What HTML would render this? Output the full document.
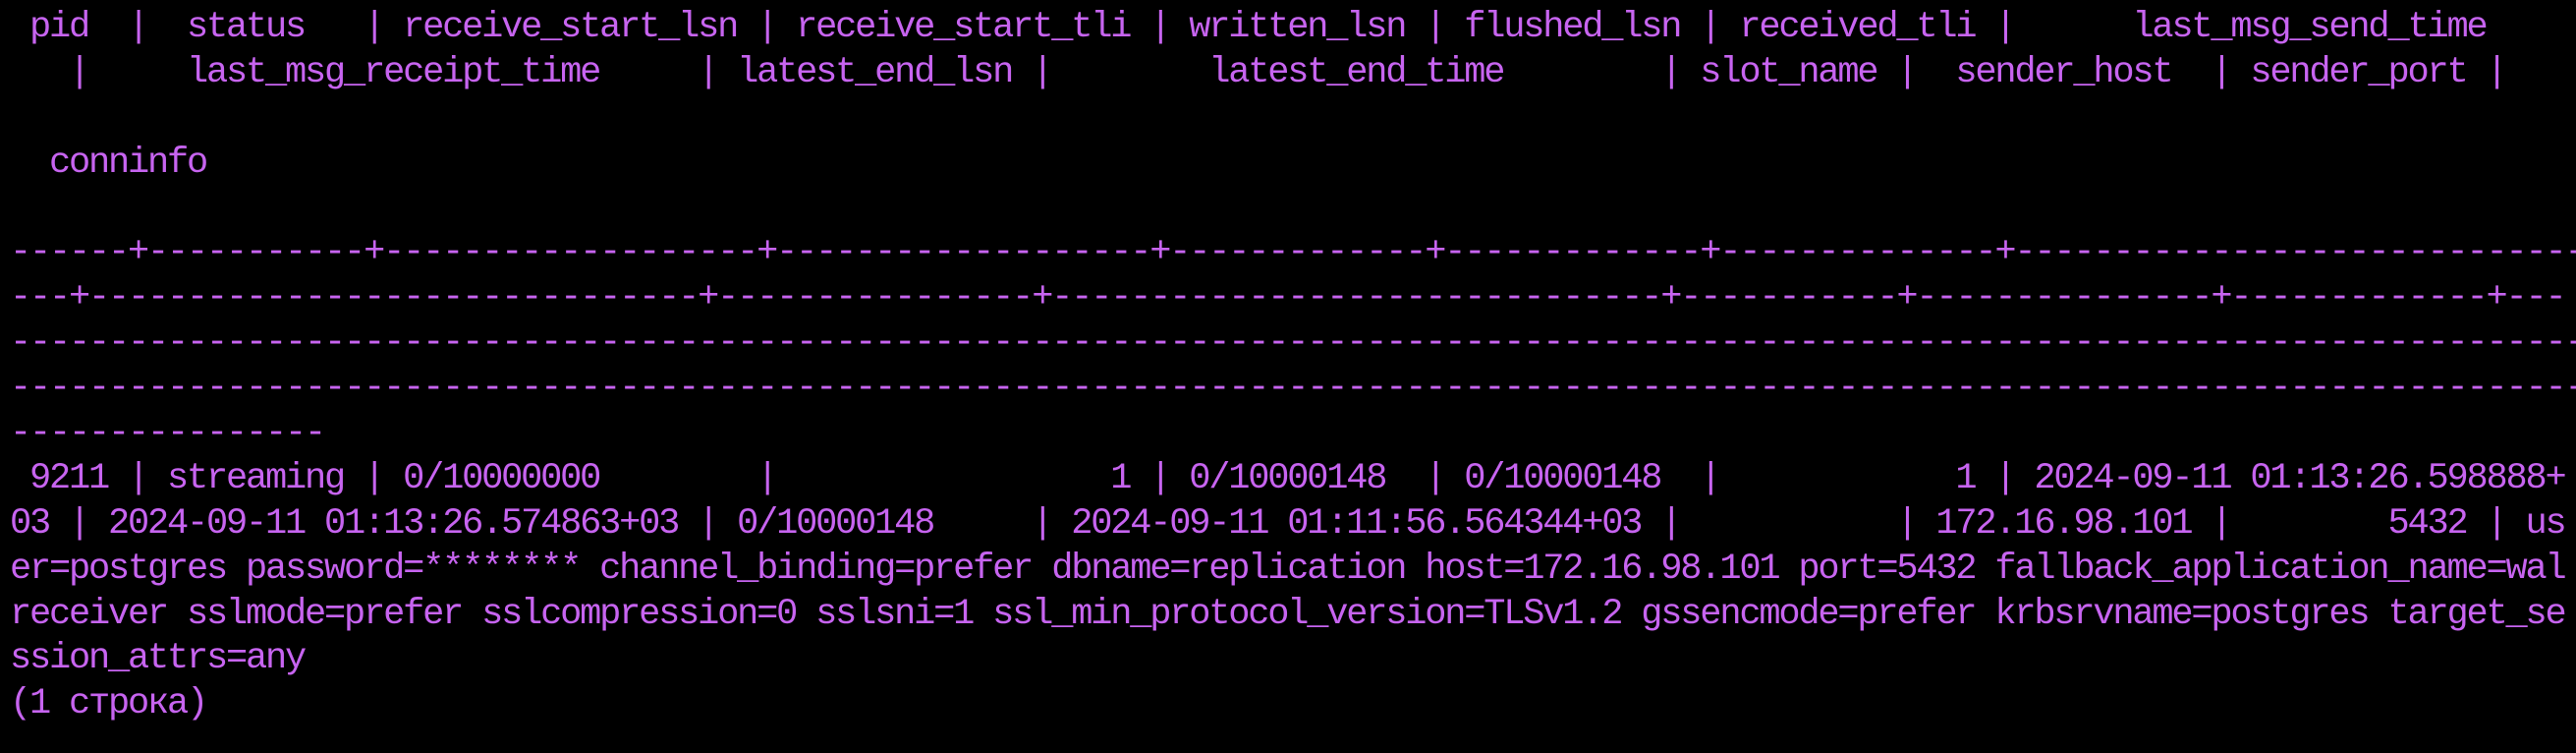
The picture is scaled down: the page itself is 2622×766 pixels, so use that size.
<!DOCTYPE html>
<html><head><meta charset="utf-8"><style>
html,body{margin:0;padding:0;background:#000;width:2622px;height:766px;overflow:hidden}
.t{position:absolute;left:10px;top:6px;font-family:"Liberation Mono","DejaVu Sans Mono",monospace;font-size:37px;letter-spacing:-2.2px;line-height:45.9px;color:#c764f0}
.t div{white-space:pre;height:45.9px;width:2613px;overflow:hidden}
</style></head><body><div class="t">
<div> pid  |  status   | receive_start_lsn | receive_start_tli | written_lsn | flushed_lsn | received_tli |      last_msg_send_time</div>
<div>   |     last_msg_receipt_time     | latest_end_lsn |        latest_end_time        | slot_name |  sender_host  | sender_port |</div>
<div> </div>
<div>  conninfo</div>
<div> </div>
<div>------+-----------+-------------------+-------------------+-------------+-------------+--------------+--------------------------------------------------</div>
<div>---+-------------------------------+----------------+-------------------------------+-----------+---------------+-------------+---</div>
<div>------------------------------------------------------------------------------------------------------------------------------------------------------</div>
<div>------------------------------------------------------------------------------------------------------------------------------------------------------</div>
<div>----------------</div>
<div> 9211 | streaming | 0/10000000        |                 1 | 0/10000148  | 0/10000148  |            1 | 2024-09-11 01:13:26.598888+</div>
<div>03 | 2024-09-11 01:13:26.574863+03 | 0/10000148     | 2024-09-11 01:11:56.564344+03 |           | 172.16.98.101 |        5432 | us</div>
<div>er=postgres password=******** channel_binding=prefer dbname=replication host=172.16.98.101 port=5432 fallback_application_name=wal</div>
<div>receiver sslmode=prefer sslcompression=0 sslsni=1 ssl_min_protocol_version=TLSv1.2 gssencmode=prefer krbsrvname=postgres target_se</div>
<div>ssion_attrs=any</div>
<div>(1 строка)</div>
</div></body></html>
